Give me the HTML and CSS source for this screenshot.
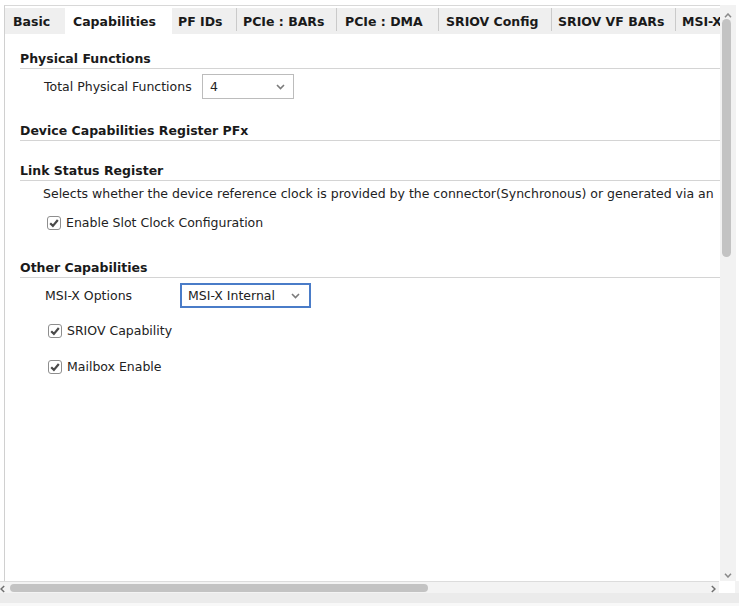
FILE: index.html
```html
<!DOCTYPE html>
<html>
<head>
<meta charset="utf-8">
<link rel="stylesheet" href="styles.css">
</head>
<body>
<div class="app">
  <div class="main">
    <div class="panel">
      <div class="tabbar">
        <div class="tab t-basic">Basic</div>
        <div class="tab tab-active t-cap">Capabilities</div>
        <div class="tab t-pfid">PF IDs</div>
        <span class="sep"></span>
        <div class="tab t-bars">PCIe : BARs</div>
        <span class="sep"></span>
        <div class="tab t-dma">PCIe : DMA</div>
        <span class="sep"></span>
        <div class="tab t-cfg">SRIOV Config</div>
        <span class="sep"></span>
        <div class="tab t-vf">SRIOV VF BARs</div>
        <span class="sep"></span>
        <div class="tab t-msix">MSI-X</div>
      </div>
      <div class="content">
        <div class="section-title">Physical Functions</div>
        <div class="row row-pf">
          <span class="label label-pf">Total Physical Functions</span>
          <div class="select select-pf">
            <span>4</span>
            <svg class="chev" width="9" height="6" viewBox="0 0 9 6"><polyline points="1,1 4.5,4.5 8,1" fill="none" stroke="#7b7b7b" stroke-width="1.6"/></svg>
          </div>
        </div>

        <div class="section-title st-dev">Device Capabilities Register PFx</div>

        <div class="section-title st-link">Link Status Register</div>
        <div class="desc">Selects whether the device reference clock is provided by the connector(Synchronous) or generated via an</div>
        <label class="check check-slot">
          <svg class="box" width="14" height="14" viewBox="0 0 14 14"><rect x="0.5" y="0.5" width="13" height="13" rx="2.5" fill="#fff" stroke="#8e8e8e"/><path d="M3.2 7.2 L5.9 9.9 L10.8 4" fill="none" stroke="#4a4a4a" stroke-width="2.2"/></svg>
          <span>Enable Slot Clock Configuration</span>
        </label>

        <div class="section-title st-other">Other Capabilities</div>
        <div class="row row-msix">
          <span class="label label-msix">MSI-X Options</span>
          <div class="select select-msix">
            <span>MSI-X Internal</span>
            <svg class="chev" width="9" height="6" viewBox="0 0 9 6"><polyline points="1,1 4.5,4.5 8,1" fill="none" stroke="#7b7b7b" stroke-width="1.6"/></svg>
          </div>
        </div>
        <label class="check check-sriov">
          <svg class="box" width="14" height="14" viewBox="0 0 14 14"><rect x="0.5" y="0.5" width="13" height="13" rx="2.5" fill="#fff" stroke="#8e8e8e"/><path d="M3.2 7.2 L5.9 9.9 L10.8 4" fill="none" stroke="#4a4a4a" stroke-width="2.2"/></svg>
          <span>SRIOV Capability</span>
        </label>
        <label class="check check-mail">
          <svg class="box" width="14" height="14" viewBox="0 0 14 14"><rect x="0.5" y="0.5" width="13" height="13" rx="2.5" fill="#fff" stroke="#8e8e8e"/><path d="M3.2 7.2 L5.9 9.9 L10.8 4" fill="none" stroke="#4a4a4a" stroke-width="2.2"/></svg>
          <span>Mailbox Enable</span>
        </label>
      </div>
    </div>
    <div class="vscroll">
      <svg class="arrow-up" width="8" height="5" viewBox="0 0 8 5"><polyline points="1,4.2 4,1 7,4.2" fill="none" stroke="#8a8a8a" stroke-width="1.5"/></svg>
      <div class="vthumb"></div>
      <svg class="arrow-down" width="8" height="5" viewBox="0 0 8 5"><polyline points="1,0.8 4,4 7,0.8" fill="none" stroke="#8a8a8a" stroke-width="1.5"/></svg>
    </div>
  </div>
  <div class="hscroll">
    <div class="htrack">
      <svg class="arrow-left" width="5" height="8" viewBox="0 0 5 8"><polyline points="4.2,1 1,4 4.2,7" fill="none" stroke="#6f6f6f" stroke-width="1.5"/></svg>
      <div class="hthumb"></div>
      <svg class="arrow-right" width="5" height="8" viewBox="0 0 5 8"><polyline points="0.8,1 4,4 0.8,7" fill="none" stroke="#6f6f6f" stroke-width="1.5"/></svg>
    </div>
    <div class="corner"></div>
    <div class="hrest"></div>
  </div>
  <div class="footer"></div>
</div>
</body>
</html>
```

FILE: styles.css
```css
* { box-sizing: border-box; }

body {
  margin: 0;
  font-family: "DejaVu Sans", sans-serif;
  font-size: 12.5px;
  color: #222;
  background: #fff;
}

.app {
  width: 739px;
  height: 606px;
  display: grid;
  grid-template-rows: 581px 12px 13px;
  overflow: hidden;
}

.main {
  display: flex;
  min-height: 0;
}

.panel {
  margin: 5px 0 0 4px;
  width: 716px;
  border-left: 1px solid #d0d0d0;
  border-top: 1px solid #d8d8d8;
  padding-top: 2px;
  display: flex;
  flex-direction: column;
  overflow: hidden;
}

.tabbar {
  height: 26px;
  flex-shrink: 0;
  display: flex;
  background: #efefef;
}

.tab {
  flex-shrink: 0;
  height: 26px;
  line-height: 27px;
  font-weight: bold;
  color: #1a1a1a;
  white-space: nowrap;
  padding-left: 6px;
}

.tab-active { background: #fff; }

.t-basic { width: 60px; padding-left: 8px; }
.t-cap { width: 107px; padding-left: 8px; }
.t-pfid { width: 64px; }
.t-bars { width: 99px; }
.t-dma { width: 101px; padding-left: 8px; }
.t-cfg { width: 112px; padding-left: 7px; }
.t-vf { width: 123px; }
.t-msix { width: 60px; }

.sep {
  flex-shrink: 0;
  width: 1px;
  height: 23px;
  background: #cacaca;
}

.content {
  flex: 1;
  background: #fff;
  padding: 16px 0 0 15px;
}

.section-title {
  font-weight: bold;
  line-height: 16px;
  padding: 1px 0 1px;
  border-bottom: 1px solid #d4d4d4;
  color: #1a1a1a;
  white-space: nowrap;
}

.st-dev { margin-top: 23px; }
.st-link { margin-top: 21px; }
.st-other { margin-top: 28px; }

.row {
  display: flex;
  align-items: center;
  height: 25px;
  margin-top: 5px;
}

.label { flex-shrink: 0; white-space: nowrap; }

.label-pf { padding-left: 24px; width: 182px; }
.label-msix { padding-left: 25px; width: 160px; }

.select {
  display: flex;
  align-items: center;
  justify-content: space-between;
  height: 25px;
  background: #fff;
  white-space: nowrap;
}

.select-pf {
  width: 92px;
  border: 1px solid #bcbcbc;
  padding: 0 8px 0 7px;
}

.select-msix {
  width: 131px;
  border: 2px solid #4a7cc8;
  padding: 0 9px 0 6px;
}

.chev { display: block; }

.desc {
  margin-top: 5px;
  padding-left: 23px;
  line-height: 16px;
  white-space: nowrap;
}

.check {
  display: flex;
  align-items: center;
  gap: 5px;
  height: 16px;
  line-height: 16px;
  white-space: nowrap;
}

.box { display: block; flex-shrink: 0; }

.check-slot { margin-top: 13px; padding-left: 27px; }
.check-sriov { margin-top: 15px; padding-left: 28px; }
.check-mail { margin-top: 20px; padding-left: 28px; }

.vscroll {
  margin-top: 5px;
  width: 16px;
  flex-shrink: 0;
  background: #f2f2f2;
  display: flex;
  flex-direction: column;
  align-items: flex-start;
}

.arrow-up { display: block; margin: 8px 0 0 4px; }

.vthumb {
  margin: 1px 0 0 2px;
  width: 9px;
  height: 238px;
  border-radius: 5px;
  background: #c3c3c3;
}

.arrow-down { display: block; margin: auto 0 3px 4px; }

.hscroll {
  display: grid;
  grid-template-columns: 719px 16px 1fr;
}

.htrack {
  display: flex;
  align-items: flex-start;
  background: #f3f3f3;
  border-top: 1px solid #dcdcdc;
}

.arrow-left { display: block; margin: 3px 0 0 0; }

.hthumb {
  margin: 2px 0 0 5px;
  width: 418px;
  height: 8px;
  border-radius: 4px;
  background: #c3c3c3;
}

.arrow-right { display: block; margin: 3px 3px 0 auto; }

.corner { background: #fff; }
.hrest { background: #f3f3f3; }

.footer {
  background: #ebebeb;
  border-bottom: 3px solid #f8f8f8;
}
```
